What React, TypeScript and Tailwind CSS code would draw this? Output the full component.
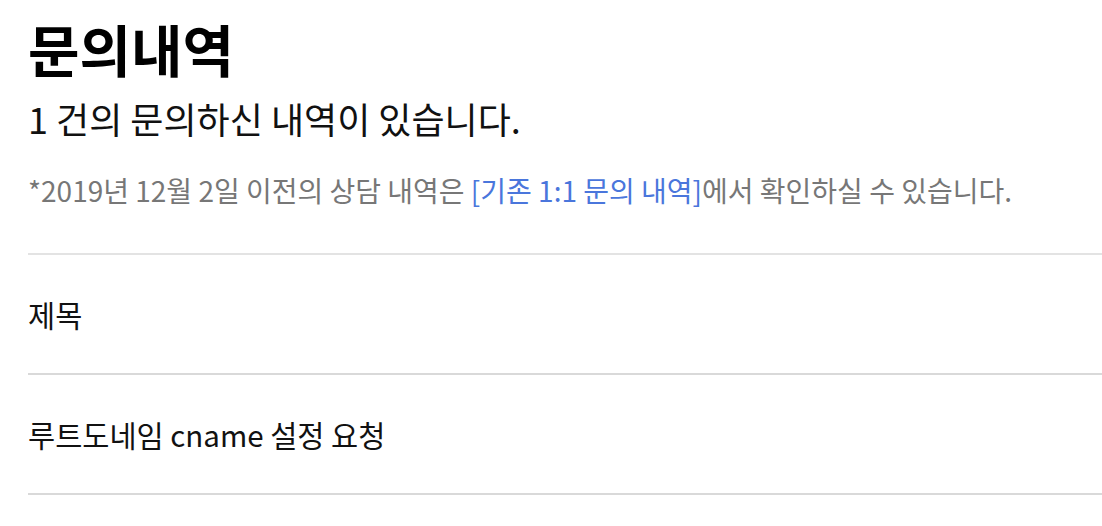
import React from "react";

const FONT = { fontFamily: '"Noto Sans CJK KR", "Noto Sans", sans-serif' };

export default function App() {
  return (
    <div className="min-h-screen bg-white pl-[28px] text-black" style={FONT}>
      <h1 className="text-[56px] font-bold leading-[96px]">문의내역</h1>
      <p className="text-[36px] leading-[44px] text-[#111]">1 건의 문의하신 내역이 있습니다.</p>
      <p className="mt-[31px] text-[28px] leading-[38px] text-[#777]">
        *2019년 12월 2일 이전의 상담 내역은{" "}
        <a className="text-[#4a76dc]">[기존 1:1 문의 내역]</a>에서 확인하실 수 있습니다.
      </p>
      <div className="mt-[44px] border-t-2 border-[#e3e3e3]">
        <div className="flex h-[118px] items-center text-[29.5px] text-[#111]">제목</div>
        <div className="flex h-[120px] items-center border-t-2 border-[#d9d9d9] text-[29.5px] text-[#111]">
          루트도네임 cname 설정 요청
        </div>
        <div className="border-t-2 border-[#d9d9d9]" />
      </div>
    </div>
  );
}
